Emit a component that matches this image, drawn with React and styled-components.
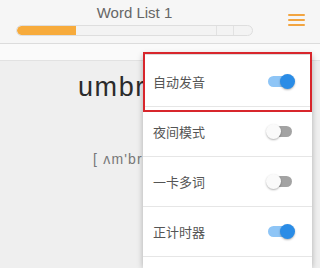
import React from "react";
import styled, { createGlobalStyle } from "styled-components";

const GlobalStyle = createGlobalStyle`
body {
  margin: 0;
  background: #efefef;
  font-family: "Liberation Sans", "Noto Sans CJK SC", sans-serif;
}
`;

const Page = styled.div`
position: relative;
width: 320px;
height: 268px;
overflow: hidden;
background: #efefef;
`;

const Header = styled.div`
display: flex;
align-items: flex-start;
height: 43px;
padding: 0 15px 0 16px;
background: #f6f6f6;
border-bottom: 1px solid #dcdcdc;
`;

const HeadCol = styled.div`
display: flex;
flex-direction: column;
width: 237px;
`;

const Title = styled.div`
margin-top: 4px;
text-align: center;
font-size: 15px;
line-height: 18px;
color: #666;
`;

const Progress = styled.div`
position: relative;
margin-top: 3px;
height: 9px;
border: 1px solid #dedede;
border-radius: 6px;
background: #f3f3f3;
overflow: hidden;
display: flex;
`;

const Fill = styled.div`
height: 100%;
background: #f7ab3c;
border-radius: 5px 0 0 5px;
`;

const Tick = styled.span`
position: absolute;
top: 0;
bottom: 0;
width: 1px;
background: #e2e2e2;
`;

const Burger = styled.div`
margin-left: auto;
margin-top: 14px;
width: 17px;
display: flex;
flex-direction: column;
gap: 3px;
span {
  display: block;
  height: 2px;
  background: #f2a541;
  border-radius: 1px;
}
`;

const SubBar = styled.div`
height: 16px;
background: #fafafa;
border-bottom: 1px solid #e2e2e2;
`;

const Main = styled.div`
display: flex;
flex-direction: column;
padding-left: 78px;
`;

const Word = styled.div`
margin-top: 10px;
font-size: 27px;
line-height: 32px;
letter-spacing: 1.6px;
color: #2b2b2b;
`;

const Phonetic = styled.div`
margin-top: 47px;
margin-left: 15px;
font-size: 14px;
line-height: 18px;
letter-spacing: 1.2px;
color: #777;
`;

const Menu = styled.div`
position: absolute;
left: 143px;
top: 55px;
width: 169px;
bottom: 0;
padding-top: 2px;
background: #fff;
box-shadow: 0 0 6px rgba(0, 0, 0, 0.28);
`;

const Row = styled.div`
position: relative;
display: flex;
align-items: center;
height: 49px;
padding: 0 17px 0 10px;
border-bottom: 1px solid #e6e6e6;
font-size: 13px;
color: #555;
&::after {
  content: "";
  display: ${(p) => (p.$marked ? "block" : "none")};
  position: absolute;
  left: 0;
  right: 0;
  top: -5px;
  bottom: -6px;
  border: 2px solid #d8262c;
}
`;

const Switch = styled.span`
position: relative;
margin-left: auto;
width: 29px;
height: 15px;
&::before {
  content: "";
  position: absolute;
  left: 2px;
  right: 3px;
  top: 2px;
  height: 11px;
  border-radius: 6px;
  background: ${(p) => (p.$on ? "#8ec5f6" : "#a3a3a3")};
}
&::after {
  content: "";
  position: absolute;
  top: 0;
  ${(p) => (p.$on ? "right: 0;" : "left: 0;")}
  width: 15px;
  height: 15px;
  border-radius: 50%;
  background: ${(p) => (p.$on ? "#2a8ce6" : "#fafafa")};
  box-shadow: 0 1px 2px rgba(0, 0, 0, 0.3);
}
`;

const items = [
  { label: "自动发音", on: true, marked: true },
  { label: "夜间模式", on: false },
  { label: "一卡多词", on: false },
  { label: "正计时器", on: true },
];

const App = () => {
  return (
    <Page>
      <GlobalStyle />
      <Header>
        <HeadCol>
          <Title>Word List 1</Title>
          <Progress>
            <Fill style={{ width: "25%" }} />
            <Tick style={{ left: "84.5%" }} />
            <Tick style={{ left: "92%" }} />
          </Progress>
        </HeadCol>
        <Burger>
          <span />
          <span />
          <span />
        </Burger>
      </Header>
      <SubBar />
      <Main>
        <Word>umbrella</Word>
        <Phonetic>[ ʌm'brelə ]</Phonetic>
      </Main>
      <Menu>
        {items.map((it) => (
          <Row key={it.label} $marked={it.marked}>
            {it.label}
            <Switch $on={it.on} />
          </Row>
        ))}
        <Row />
      </Menu>
    </Page>
  );
};

export default App;
